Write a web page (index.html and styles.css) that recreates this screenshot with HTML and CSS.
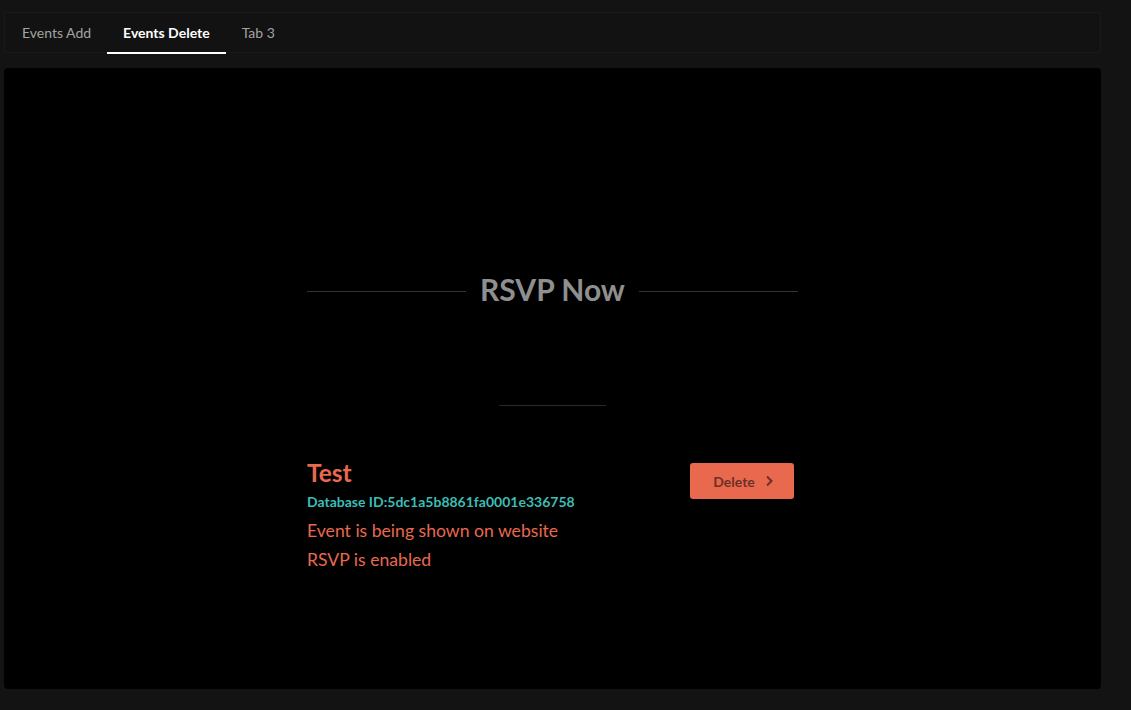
FILE: index.html
```html
<!DOCTYPE html>
<html>
<head>
<meta charset="utf-8">
<link rel="stylesheet" href="styles.css">
</head>
<body>
<div class="page">
  <nav class="tabs">
    <div class="tab">Events Add</div>
    <div class="tab active">Events Delete</div>
    <div class="tab">Tab 3</div>
  </nav>
  <main class="panel">
    <div class="section">
      <div class="title-row">
        <span class="rule"></span>
        <h2 class="title">RSVP Now</h2>
        <span class="rule"></span>
      </div>
      <div class="short-rule"></div>
      <div class="event">
        <div class="info">
          <div class="name">Test</div>
          <div class="dbid">Database ID:5dc1a5b8861fa0001e336758</div>
          <div class="status">Event is being shown on website</div>
          <div class="status">RSVP is enabled</div>
        </div>
        <button class="delete">Delete
          <svg width="8" height="12" viewBox="0 0 8 12"><path d="M2 1.5 L6.5 6 L2 10.5" fill="none" stroke="currentColor" stroke-width="2"/></svg>
        </button>
      </div>
    </div>
  </main>
</div>
</body>
</html>
```
FILE: styles.css
```css
* { box-sizing: border-box; }
html, body { margin: 0; padding: 0; background: #131313; }
body { font-family: Lato, "Open Sans", sans-serif; }
.page { padding: 12px 30px 0 4px; }
.tabs {
  display: flex;
  height: 41px;
  border: 1px solid #191919;
  background: #121212;
  padding-left: 1px;
}
.tab {
  padding: 0 16px;
  font-size: 14px;
  line-height: 40px;
  color: #a3a3a3;
  border-bottom: 2px solid transparent;
  height: 41px;
}
.tab.active { color: #fff; font-weight: bold; border-bottom-color: #fff; }
.panel {
  margin-top: 15px;
  height: 621px;
  background: #000;
  border-radius: 4px;
}
.section { width: 491px; margin: 0 auto; padding-top: 204px; }
.title-row { display: flex; align-items: center; gap: 14px; }
.rule { flex: 1; height: 1px; background: #333; margin-top: 4px; }
.title { margin: 0; font-size: 30px; line-height: 34px; font-weight: bold; color: #8f8f8f; }
.short-rule { width: 107px; height: 1px; background: #2a2a2a; margin: 99px auto 0; }
.event { display: flex; justify-content: space-between; align-items: flex-start; margin-top: 53px; }
.name { font-size: 24.5px; line-height: 28px; font-weight: bold; color: #e8694e; }
.dbid { font-size: 14px; line-height: 18px; font-weight: bold; color: #3cbdb6; margin-top: 6px; }
.status { font-size: 17.6px; line-height: 29px; color: #e8694e; }
.dbid + .status { margin-top: 5px; }
.delete {
  margin-top: 4px;
  margin-right: 4px;
  width: 104px;
  height: 36px;
  background: #e8694e;
  border: none;
  border-radius: 3px;
  font-family: inherit;
  font-size: 14px;
  font-weight: bold;
  color: #6e3024;
  display: flex;
  align-items: center;
  justify-content: center;
  gap: 10px;
  padding: 0 0 0 2px;
}
```
